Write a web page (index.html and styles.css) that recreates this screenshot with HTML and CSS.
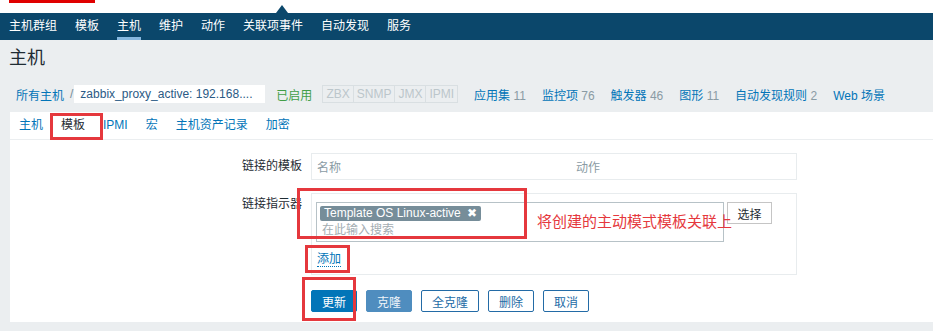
FILE: index.html
```html
<!DOCTYPE html>
<html lang="zh-CN">
<head>
<meta charset="utf-8">
<title>主机</title>
<link rel="stylesheet" href="styles.css">
</head>
<body>
<div class="topstrip"></div>
<nav class="subnav">
  <a class="nav-item">主机群组</a>
  <a class="nav-item">模板</a>
  <a class="nav-item active">主机</a>
  <a class="nav-item">维护</a>
  <a class="nav-item">动作</a>
  <a class="nav-item">关联项事件</a>
  <a class="nav-item">自动发现</a>
  <a class="nav-item">服务</a>
</nav>
<header class="title-bar"><h1>主机</h1></header>
<div class="crumbs">
  <a class="crumb-link">所有主机</a>
  <span class="sep">/</span>
  <span class="crumb-current">zabbix_proxy_active: 192.168....</span>
  <span class="status">已启用</span>
  <span class="avail"><span>ZBX</span><span>SNMP</span><span>JMX</span><span>IPMI</span></span>
  <a class="count-link">应用集 <span class="count">11</span></a>
  <a class="count-link">监控项 <span class="count">76</span></a>
  <a class="count-link">触发器 <span class="count">46</span></a>
  <a class="count-link">图形 <span class="count">11</span></a>
  <a class="count-link">自动发现规则 <span class="count">2</span></a>
  <a class="count-link">Web 场景</a>
</div>
<main class="panel">
  <ul class="tabs">
    <li><a>主机</a></li>
    <li class="active"><a>模板</a></li>
    <li><a>IPMI</a></li>
    <li><a>宏</a></li>
    <li><a>主机资产记录</a></li>
    <li><a>加密</a></li>
  </ul>
  <form class="form">
    <div class="form-row">
      <label class="row-label">链接的模板</label>
      <div class="table-box"><span class="col-name">名称</span><span class="col-action">动作</span></div>
    </div>
    <div class="form-row second">
      <label class="row-label top">链接指示器</label>
      <div class="linker">
        <div class="ms-line">
          <div class="multiselect">
            <span class="tag">Template OS Linux-active <span class="tag-x">✖</span></span>
            <div class="ms-input">在此输入搜索</div>
          </div>
          <button type="button" class="btn-select">选择</button>
        </div>
        <a class="add-link">添加</a>
      </div>
    </div>
    <div class="form-buttons">
      <button type="button" class="btn btn-primary">更新</button>
      <button type="button" class="btn btn-clone">克隆</button>
      <button type="button" class="btn btn-alt">全克隆</button>
      <button type="button" class="btn btn-alt">删除</button>
      <button type="button" class="btn btn-alt">取消</button>
    </div>
  </form>
</main>
<div class="anno-bar"></div>
<div class="anno anno-tab"></div>
<div class="anno anno-ms"></div>
<div class="anno anno-add"></div>
<div class="anno anno-update"></div>
<div class="anno-text">将创建的主动模式模板关联上</div>
</body>
</html>
```
FILE: styles.css
```css
* { box-sizing: border-box; margin: 0; padding: 0; }
html, body { width: 933px; height: 331px; overflow: hidden; }
body {
  position: relative;
  background: #ebeef0;
  font-family: "Liberation Sans", "Noto Sans CJK SC", sans-serif;
  font-size: 12px;
  color: #1f2c33;
}
a { color: #0275b8; text-decoration: none; cursor: pointer; }

.topstrip { height: 13px; background: #fff; }

.subnav {
  position: relative;
  height: 27px;
  background: #0b476b;
  display: flex;
}
.subnav::before {
  content: "";
  position: absolute;
  left: 276px;
  top: -8px;
  border-left: 6px solid transparent;
  border-right: 6px solid transparent;
  border-bottom: 8px solid #0b476b;
}
.nav-item {
  position: relative;
  color: #fff;
  padding: 0 9px;
  line-height: 27px;
}
.nav-item.active::after {
  content: "";
  position: absolute;
  left: 9px;
  right: 9px;
  bottom: 0;
  height: 3px;
  background: #86b8df;
}

.title-bar {
  height: 36px;
  padding-left: 9px;
  display: flex;
  align-items: center;
}
.title-bar h1 { font-size: 18px; font-weight: normal; color: #1f2c33; line-height: 24px; }

.crumbs {
  height: 36px;
  display: flex;
  align-items: center;
  padding-left: 16px;
  white-space: nowrap;
}
.sep { margin: 0 1px 0 6px; color: #768d99; }
.crumb-current {
  background: #fff;
  height: 18px;
  line-height: 18px;
  width: 191px;
  padding: 0 6px;
  color: #2b5a85;
}
.status { color: #429e47; margin-left: 11px; }
.avail { display: flex; margin-left: 11px; }
.avail span {
  border: 1px solid #d9dfe2;
  color: #bcc6cb;
  padding: 0 3px;
  line-height: 16px;
  margin-left: -1px;
}
.count-link { margin-left: 16px; }
.count { color: #8a9ba4; }

.panel {
  margin-left: 10px;
  height: 210px;
  background: #fff;
}
.tabs {
  list-style: none;
  display: flex;
  height: 28px;
  border-bottom: 1px solid #ebeef0;
}
.tabs li { padding: 0 9px; line-height: 27px; }
.tabs li.active a { color: #1f2c33; }

.form-row {
  display: grid;
  grid-template-columns: 292px 486px;
  column-gap: 9px;
  margin-top: 13px;
}
.row-label { text-align: right; line-height: 25px; padding-top: 1px; color: #1f2c33; }
.row-label.top { line-height: 16px; padding-top: 3px; }

.table-box {
  height: 27px;
  border: 1px solid #e8ecee;
  display: flex;
  align-items: center;
  color: #8a9ba4;
}
.col-name { width: 264px; padding-left: 5px; }

.linker {
  height: 82px;
  border: 1px solid #e8ecee;
  padding: 8px 4px;
}
.ms-line { display: flex; align-items: flex-start; }
.multiselect {
  width: 408px;
  height: 40px;
  border: 1px solid #b7c2c7;
  padding: 3px;
}
.tag {
  display: inline-block;
  background: #768d99;
  color: #fff;
  height: 15px;
  line-height: 15px;
  padding: 0 4px;
  border-radius: 2px;
}
.tag-x { font-size: 12px; margin-left: 3px; }
.ms-input { color: #a3adb2; line-height: 16px; margin-top: 1px; padding-left: 2px; }
.btn-select {
  margin-left: 3px;
  width: 45px;
  height: 22px;
  background: #fff;
  border: 1px solid #c5c5c5;
  font: inherit;
  color: #1f2c33;
}
.add-link {
  display: inline-block;
  margin-top: 10px;
  margin-left: 1px;
  line-height: 14px;
  border-bottom: 1px dotted #0275b8;
}

.form-buttons {
  display: flex;
  gap: 9px;
  margin: 15px 0 0 301px;
}
.btn {
  height: 22px;
  padding: 0 10px;
  border: 1px solid;
  border-radius: 2px;
  font: inherit;
}
.btn-primary { background: #0275b8; border-color: #0275b8; color: #fff; }
.btn-clone { background: #4f8dbf; border-color: #4f8dbf; color: #eef4f9; }
.btn-alt { background: #fff; border-color: #236ba6; color: #236ba6; }

.anno { position: absolute; border: 3px solid #e5383d; }
.anno-tab { left: 50px; top: 113px; width: 53px; height: 27px; }
.anno-ms { left: 297px; top: 188px; width: 230px; height: 51px; }
.anno-add { left: 305px; top: 245px; width: 45px; height: 28px; }
.anno-update { left: 302px; top: 277px; width: 54px; height: 44px; }
.anno-bar { position: absolute; left: 9px; top: 0; width: 86px; height: 3px; background: #e00000; }
.anno-text {
  position: absolute;
  left: 537px;
  top: 212px;
  font-size: 15px;
  line-height: 20px;
  color: #e5383d;
}
```
